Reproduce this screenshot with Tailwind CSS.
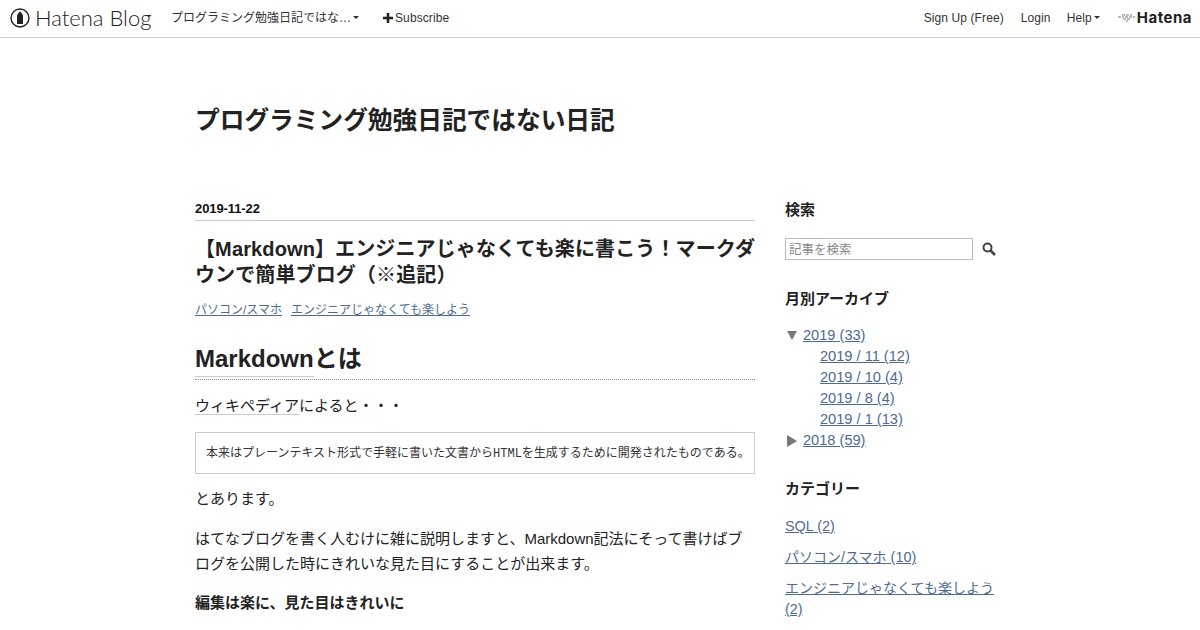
<!DOCTYPE html>
<html lang="ja">
<head>
    <meta charset="UTF-8">
    <title>プログラミング勉強日記ではない日記</title>
    <script src="https://cdn.jsdelivr.net/npm/@tailwindcss/browser@4"></script>
</head>
<body class="bg-white h-[630px] overflow-hidden text-[#222] font-['Liberation_Sans','Noto_Sans_CJK_JP',sans-serif]">
    <!-- Top bar -->
    <header class="h-[38px] pb-[2px] border-b border-[#ccc] flex items-center justify-between text-[12px] tracking-[0.1px] text-[#333] whitespace-nowrap">
        <div class="flex items-center">
            <a class="flex items-center ml-[10px] w-[160px] text-[#222]">
                <svg class="w-[20px] h-[20px]" viewBox="0 0 20 20">
                    <circle cx="10" cy="10" r="9" fill="none" stroke="#222" stroke-width="1.4"/>
                    <path d="M10 3.2 C11 4.5 13 6 13 8 L13 16 L7 16 L7 8 C7 6 9 4.5 10 3.2 Z" fill="#222"/>
                </svg>
                <span class="ml-[5px] font-['Lato',sans-serif] font-light text-[22px] tracking-normal leading-none">Hatena Blog</span>
            </a>
            <span class="ml-[1px] flex items-center w-[190px] tracking-normal">プログラミング勉強日記ではな…<i class="ml-[2px] border-x-[3px] border-x-transparent border-t-[3px] border-t-[#333]"></i></span>
            <span class="ml-[22px] flex items-center">
                <svg class="w-[10px] h-[10px] mr-[2px]" viewBox="0 0 10 10"><path d="M3.7 0h2.6v3.7H10v2.6H6.3V10H3.7V6.3H0V3.7h3.7z" fill="#222"/></svg>Subscribe</span>
        </div>
        <div class="flex items-center">
            <span>Sign Up (Free)</span>
            <span class="ml-[17px]">Login</span>
            <span class="ml-[16px] flex items-center">Help<i class="ml-[2px] border-x-[3px] border-x-transparent border-t-[3px] border-t-[#333]"></i></span>
            <svg class="w-[18px] h-[10px] ml-[18px]" viewBox="0 0 18 10">
                <path d="M0 4h6M4 2h10M7 4h10M5 6h8M8 8h2" stroke="#666" stroke-width="0.9" stroke-dasharray="3 1" fill="none"/>
            </svg>
            <span class="mr-[8px] ml-[1px] mt-[2px] font-['Inter',sans-serif] font-bold text-[15px] text-[#222] tracking-[0.5px]">Hatena</span>
        </div>
    </header>

    <div class="w-[810px] ml-[195px]">
        <h1 class="mt-[67px] h-[32px] text-[24.7px] leading-[32px] font-bold">プログラミング勉強日記ではない日記</h1>

        <div class="mt-[64px] flex">
            <!-- Article -->
            <main class="w-[560px]">
                <div class="h-[20px] text-[13px] leading-[15px] tracking-[-0.1px] font-bold text-[#111] border-b border-[#ccc]">2019-11-22</div>
                <h2 class="mt-[15px] mr-[-6px] text-[20px] leading-[26px] tracking-[0.12px] font-bold">【Markdown】エンジニアじゃなくても楽に書こう！マークダウンで簡単ブログ（※追記）</h2>
                <div class="mt-[13px] flex gap-[9px] text-[12px] leading-[18px] text-[#4d6a94] underline">
                    <a>パソコン/スマホ</a>
                    <a>エンジニアじゃなくても楽しよう</a>
                </div>
                <h3 class="mt-[22px] h-[39px] text-[24px] leading-[36px] font-bold border-b border-dotted border-[#888]"><span class="inline-block h-[36px] border-b border-[#ccc]">Markdown</span>とは</h3>
                <p class="mt-[13px] text-[15px] leading-[25px]"><span class="border-b border-[#ccc]">ウィキペディア</span>によると・・・</p>
                <blockquote class="mt-[14px] h-[42px] px-[10px] border border-[#ccc] text-[12px] leading-[40px] whitespace-nowrap text-[#333]">本来はプレーンテキスト形式で手軽に書いた文書から<span class="font-['Liberation_Mono',monospace]">HTML</span>を生成するために開発されたものである。</blockquote>
                <p class="mt-[12px] text-[15px] leading-[25px]">とあります。</p>
                <p class="mt-[15px] text-[15px] leading-[25px]">はてなブログを書く人むけに雑に説明しますと、Markdown記法にそって書けばブログを公開した時にきれいな見た目にすることが出来ます。</p>
                <h4 class="mt-[14px] text-[15px] leading-[25px] font-bold">編集は楽に、見た目はきれいに</h4>
            </main>

            <!-- Sidebar -->
            <aside class="ml-[30px] w-[220px] text-[15px]">
                <h5 class="mt-[-1px] text-[15px] leading-[20px] font-bold">検索</h5>
                <div class="mt-[18px] flex items-center">
                    <div class="w-[188px] h-[22px] border border-[#bbb] pl-[3px] text-[12.5px] leading-[22px] text-[#888]">記事を検索</div>
                    <svg class="ml-[9px] w-[14px] h-[14px]" viewBox="0 0 14 14">
                        <circle cx="5.5" cy="5.5" r="4" fill="none" stroke="#444" stroke-width="2"/>
                        <path d="M8.5 8.5L13 13" stroke="#444" stroke-width="2.6"/>
                    </svg>
                </div>
                <h5 class="mt-[29px] text-[15px] leading-[20px] font-bold">月別アーカイブ</h5>
                <ul class="mt-[16px] text-[14.6px] leading-[21px] text-[#4d6a94]">
                    <li class="flex items-center"><i class="w-[18px]"><b class="block w-0 ml-[2px] border-x-[5px] border-x-transparent border-t-[9px] border-t-[#777]"></b></i><a class="underline">2019 (33)</a></li>
                    <li class="pl-[35px] underline">2019 / 11 (12)</li>
                    <li class="pl-[35px] underline">2019 / 10 (4)</li>
                    <li class="pl-[35px] underline">2019 / 8 (4)</li>
                    <li class="pl-[35px] underline">2019 / 1 (13)</li>
                    <li class="flex items-center"><i class="w-[18px]"><b class="block w-0 ml-[2px] border-y-[6px] border-y-transparent border-l-[10px] border-l-[#777]"></b></i><a class="underline">2018 (59)</a></li>
                </ul>
                <h5 class="mt-[28px] text-[15px] leading-[20px] font-bold">カテゴリー</h5>
                <ul class="mt-[17px] w-[212px] text-[14.4px] leading-[21px] text-[#4d6a94] underline">
                    <li>SQL (2)</li>
                    <li class="mt-[10px]"><span class="text-[14px]">パソコン</span>/<span class="text-[14px]">スマホ</span> (10)</li>
                    <li class="mt-[10px]"><span class="text-[14px]">エンジニアじゃなくても楽しよう</span> (2)</li>
                </ul>
            </aside>
        </div>
    </div>
</body>
</html>
